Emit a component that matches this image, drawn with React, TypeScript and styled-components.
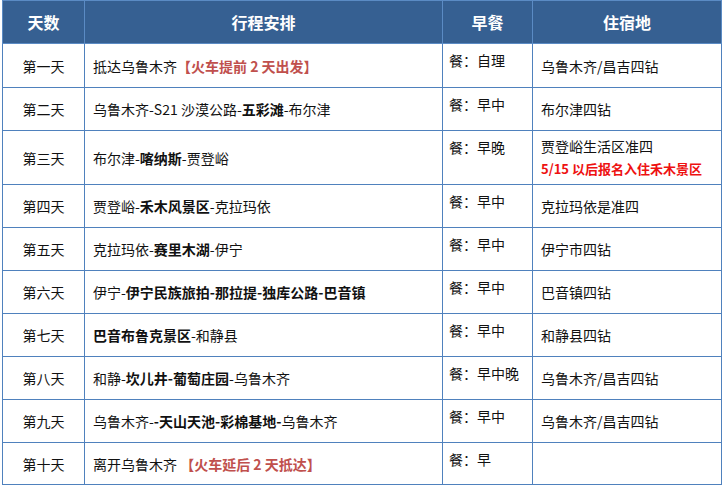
import React from "react";
import styled, { createGlobalStyle } from "styled-components";

const GlobalStyle = createGlobalStyle`
  html, body {
    margin: 0;
    padding: 0;
    background: #ffffff;
  }
  body {
    font-family: "Noto Sans CJK SC", "Noto Sans", sans-serif;
    color: #111;
  }
`;

type Part = { text: string; bold?: boolean };

interface Day {
  day: string;
  route: Part[];
  tag?: string;
  meal: string;
  stay: string;
  note?: string;
  height: number;
}

const days: Day[] = [
  { day: "第一天", route: [{ text: "抵达乌鲁木齐" }], tag: "【火车提前 2 天出发】", meal: "自理", stay: "乌鲁木齐/昌吉四钻", height: 44 },
  { day: "第二天", route: [{ text: "乌鲁木齐-S21 沙漠公路-" }, { text: "五彩滩", bold: true }, { text: "-布尔津" }], meal: "早中", stay: "布尔津四钻", height: 43 },
  { day: "第三天", route: [{ text: "布尔津-" }, { text: "喀纳斯", bold: true }, { text: "-贾登峪" }], meal: "早晚", stay: "贾登峪生活区准四", note: "5/15 以后报名入住禾木景区", height: 54 },
  { day: "第四天", route: [{ text: "贾登峪-" }, { text: "禾木风景区", bold: true }, { text: "-克拉玛依" }], meal: "早中", stay: "克拉玛依是准四", height: 43 },
  { day: "第五天", route: [{ text: "克拉玛依-" }, { text: "赛里木湖", bold: true }, { text: "-伊宁" }], meal: "早中", stay: "伊宁市四钻", height: 43 },
  { day: "第六天", route: [{ text: "伊宁-" }, { text: "伊宁民族旅拍-那拉提-独库公路-巴音镇", bold: true }], meal: "早中", stay: "巴音镇四钻", height: 43 },
  { day: "第七天", route: [{ text: "巴音布鲁克景区", bold: true }, { text: "-和静县" }], meal: "早中", stay: "和静县四钻", height: 43 },
  { day: "第八天", route: [{ text: "和静-" }, { text: "坎儿井-葡萄庄园", bold: true }, { text: "-乌鲁木齐" }], meal: "早中晚", stay: "乌鲁木齐/昌吉四钻", height: 43 },
  { day: "第九天", route: [{ text: "乌鲁木齐-" }, { text: "-天山天池-彩棉基地-", bold: true }, { text: "乌鲁木齐" }], meal: "早中", stay: "乌鲁木齐/昌吉四钻", height: 43 },
  { day: "第十天", route: [{ text: "离开乌鲁木齐 " }], tag: "【火车延后 2 天抵达】", meal: "早", stay: "", height: 42 },
];

export default function App() {
  return (
    <>
      <GlobalStyle />
      <Page>
        <Table>
          <colgroup>
            <col style={{ width: 82 }} />
            <col style={{ width: 358 }} />
            <col style={{ width: 90 }} />
            <col style={{ width: 189 }} />
          </colgroup>
          <thead>
            <Row $h={43}>
              <HeadCell>天数</HeadCell>
              <HeadCell>行程安排</HeadCell>
              <HeadCell>早餐</HeadCell>
              <HeadCell>住宿地</HeadCell>
            </Row>
          </thead>
          <tbody>
            {days.map((d) => (
              <Row key={d.day} $h={d.height}>
                <DayCell>{d.day}</DayCell>
                <RouteCell>
                  {d.route.map((p, i) =>
                    p.bold ? <Strong key={i}>{p.text}</Strong> : <span key={i}>{p.text}</span>
                  )}
                  {d.tag && <Tag>{d.tag}</Tag>}
                </RouteCell>
                <MealCell>餐：{d.meal}</MealCell>
                <StayCell>
                  <StayLine>{d.stay}</StayLine>
                  {d.note && <Note>{d.note}</Note>}
                </StayCell>
              </Row>
            ))}
          </tbody>
        </Table>
      </Page>
    </>
  );
}

const Page = styled.div`
  padding-left: 2px;
`;

const Table = styled.table`
  width: 720px;
  table-layout: fixed;
  border-collapse: collapse;
  font-size: 14px;
  line-height: 20px;
`;

const Row = styled.tr<{ $h: number }>`
  height: ${(p) => p.$h}px;
`;

const cell = `
  border: 1px solid #4f81bd;
  padding: 0 8px;
  vertical-align: middle;
`;

const HeadCell = styled.th`
  ${cell}
  background: #366092;
  color: #ffffff;
  font-size: 16px;
  font-weight: bold;
  text-align: center;
  border-color: #5b8bc4;
`;

const DayCell = styled.td`
  ${cell}
  text-align: center;
`;

const RouteCell = styled.td`
  ${cell}
  white-space: nowrap;
`;

const Strong = styled.b`
  font-weight: bold;
`;

const Tag = styled.b`
  color: #c0504d;
  font-weight: bold;
`;

const MealCell = styled.td`
  ${cell}
  vertical-align: top;
  padding: 6px 6px 0;
`;

const StayCell = styled.td`
  ${cell}
`;

const StayLine = styled.div`
  line-height: 20px;
`;

const Note = styled.div`
  color: #ee1111;
  font-size: 13px;
  font-weight: bold;
  line-height: 20px;
  margin-top: 3px;
`;
